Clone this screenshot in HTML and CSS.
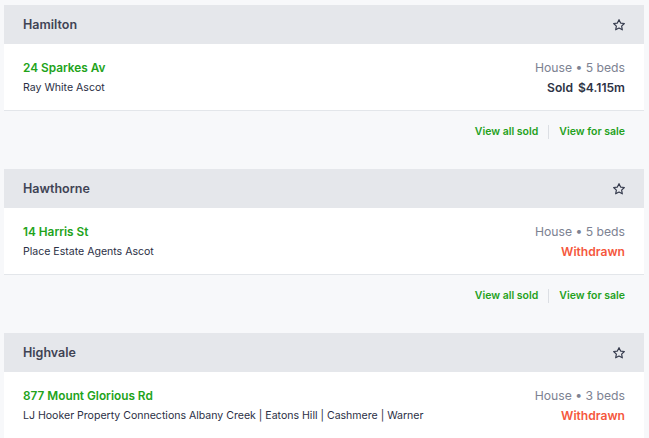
FILE: index.html
```html
<!DOCTYPE html>
<html>
<head>
<meta charset="utf-8">
<link rel="stylesheet" href="styles.css">
</head>
<body>
<div class="list">
  <section class="suburb">
    <div class="suburb-head">
      <h2 class="suburb-name">Hamilton</h2>
      <svg class="star" viewBox="0 0 24 24" width="14" height="14"><path d="M12 2.8l2.8 5.9 6.4.8-4.7 4.4 1.2 6.4L12 17.2l-5.7 3.1 1.2-6.4-4.7-4.4 6.4-.8z" fill="none" stroke="currentColor" stroke-width="2" stroke-linejoin="round"/></svg>
    </div>
    <div class="listing">
      <div class="col-left">
        <div class="address">24 Sparkes Av</div>
        <div class="agent">Ray White Ascot</div>
      </div>
      <div class="col-right">
        <div class="meta">House • 5 beds</div>
        <div class="status sold"><span class="sold-label">Sold</span>$4.115m</div>
      </div>
    </div>
    <div class="links">
      <a class="link">View all sold</a>
      <a class="link sep">View for sale</a>
    </div>
  </section>

  <section class="suburb">
    <div class="suburb-head">
      <h2 class="suburb-name">Hawthorne</h2>
      <svg class="star" viewBox="0 0 24 24" width="14" height="14"><path d="M12 2.8l2.8 5.9 6.4.8-4.7 4.4 1.2 6.4L12 17.2l-5.7 3.1 1.2-6.4-4.7-4.4 6.4-.8z" fill="none" stroke="currentColor" stroke-width="2" stroke-linejoin="round"/></svg>
    </div>
    <div class="listing">
      <div class="col-left">
        <div class="address">14 Harris St</div>
        <div class="agent">Place Estate Agents Ascot</div>
      </div>
      <div class="col-right">
        <div class="meta">House • 5 beds</div>
        <div class="status withdrawn">Withdrawn</div>
      </div>
    </div>
    <div class="links">
      <a class="link">View all sold</a>
      <a class="link sep">View for sale</a>
    </div>
  </section>

  <section class="suburb">
    <div class="suburb-head">
      <h2 class="suburb-name">Highvale</h2>
      <svg class="star" viewBox="0 0 24 24" width="14" height="14"><path d="M12 2.8l2.8 5.9 6.4.8-4.7 4.4 1.2 6.4L12 17.2l-5.7 3.1 1.2-6.4-4.7-4.4 6.4-.8z" fill="none" stroke="currentColor" stroke-width="2" stroke-linejoin="round"/></svg>
    </div>
    <div class="listing">
      <div class="col-left">
        <div class="address">877 Mount Glorious Rd</div>
        <div class="agent">LJ Hooker Property Connections Albany Creek | Eatons Hill | Cashmere | Warner</div>
      </div>
      <div class="col-right">
        <div class="meta">House • 3 beds</div>
        <div class="status withdrawn">Withdrawn</div>
      </div>
    </div>
  </section>
</div>
</body>
</html>
```

FILE: styles.css
```css
html, body {
  margin: 0;
  padding: 0;
  background: #f7f8fa;
}
body {
  font-family: Inter, "Noto Sans", Arial, sans-serif;
  color: #2b2f45;
  padding: 5px 5px 0 4px;
}
.list {
  display: flex;
  flex-direction: column;
  gap: 19px;
}
.suburb-head {
  height: 39px;
  background: #e5e7eb;
  display: flex;
  align-items: center;
  justify-content: space-between;
  padding: 0 19px;
}
.suburb-name {
  margin: 0;
  font-size: 12.5px;
  font-weight: 600;
  color: #3f4354;
}
.star {
  color: #343a4c;
  margin-right: -1px;
}
.listing {
  background: #fff;
  border-bottom: 1px solid #e3e6ea;
  padding: 14px 19px 12px;
  display: flex;
  justify-content: space-between;
  line-height: 20px;
}
.address {
  font-size: 11.8px;
  font-weight: 600;
  color: #22a31a;
}
.agent {
  font-size: 10.55px;
  color: #2b2f45;
}
.col-right {
  text-align: right;
}
.meta {
  font-size: 12.2px;
  color: #7d8292;
}
.status {
  font-size: 12.1px;
  font-weight: 600;
}
.sold {
  color: #2e3345;
}
.sold-label {
  margin-right: 5px;
}
.withdrawn {
  color: #f5573d;
}
.links {
  display: flex;
  justify-content: flex-end;
  padding: 11px 19px 8px;
  line-height: 20px;
}
.link {
  font-size: 10.5px;
  font-weight: 600;
  color: #24a11c;
}
.link.sep {
  margin-left: 10px;
  padding-left: 10px;
  border-left: 1px solid #dcdfe4;
  line-height: 14px;
  margin-top: 3px;
  margin-bottom: 3px;
}
```
